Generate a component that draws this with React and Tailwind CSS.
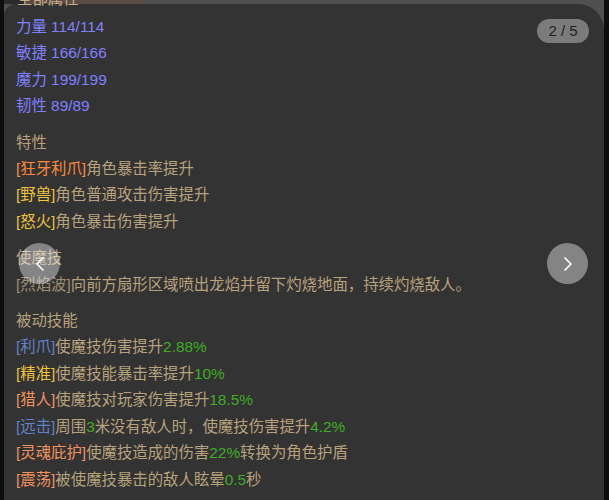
import React from 'react';

const font = { fontFamily: '"Liberation Sans", "Noto Sans CJK SC", sans-serif' };

const stats = [
  ['力量', '114/114'],
  ['敏捷', '166/166'],
  ['魔力', '199/199'],
  ['韧性', '89/89'],
];

const traits = [
  { tag: '狂牙利爪', color: 'text-[#ff8a3d]', text: '角色暴击率提升' },
  { tag: '野兽', color: 'text-[#eec23c]', text: '角色普通攻击伤害提升' },
  { tag: '怒火', color: 'text-[#eec23c]', text: '角色暴击伤害提升' },
];

// passive skills: parts are [text, isNumber]
const passives = [
  { tag: '利爪', color: 'text-[#5f82c8]', parts: [['使魔技伤害提升'], ['2.88%', 1]] },
  { tag: '精准', color: 'text-[#eec23c]', parts: [['使魔技能暴击率提升'], ['10%', 1]] },
  { tag: '猎人', color: 'text-[#f3925e]', parts: [['使魔技对玩家伤害提升'], ['18.5%', 1]] },
  {
    tag: '远击',
    color: 'text-[#5f82c8]',
    parts: [['周围'], ['3', 1], ['米没有敌人时，使魔技伤害提升'], ['4.2%', 1]],
  },
  {
    tag: '灵魂庇护',
    color: 'text-[#f3925e]',
    parts: [['使魔技造成的伤害'], ['22%', 1], ['转换为角色护盾']],
  },
  { tag: '震荡', color: 'text-[#f3925e]', parts: [['被使魔技暴击的敌人眩晕'], ['0.5', 1], ['秒']] },
];

function Chevron({ dir }) {
  return (
    <svg width="12" height="18" viewBox="0 0 12 18" fill="none">
      <polyline
        points={dir === 'left' ? '9,3 3,9 9,15' : '3,3 9,9 3,15'}
        stroke="#ffffff"
        strokeWidth="1.7"
        strokeLinecap="round"
        strokeLinejoin="round"
      />
    </svg>
  );
}

export default function App() {
  return (
    <div className="w-[609px] h-[500px] overflow-hidden bg-[#0e0e0e] pl-[4px] pr-[5px]" style={font}>
      <div className="relative h-full bg-[#4f4f4f] pt-[4px]">
        <div className="absolute left-0 top-0 w-[21px] h-[4px] bg-[#2b2b2b]" />
        <div className="absolute left-[21px] top-0 w-[120px] h-[4px] bg-[#5d4b45]" />

        <div className="relative h-full rounded-tl-[12px] rounded-tr-[26px] bg-[#333333] pl-[12px] pr-[12px] pt-[10px] text-[15.4px] leading-[26.4px] text-[#b8a27b]">
          <span className="absolute right-[15px] top-[15px] h-[24px] w-[52px] rounded-full bg-[#7b7b7b] text-[15px] leading-[24px] text-center text-[#1f1f1f]">
            2 / 5
          </span>

          <div className="text-[#8080ff]">
            {stats.map(([k, v]) => (
              <div key={k}>
                {k} {v}
              </div>
            ))}
          </div>

          <div className="mt-[10px]">
            <div>特性</div>
            {traits.map((t) => (
              <div key={t.tag}>
                <span className={t.color}>[{t.tag}]</span>
                {t.text}
              </div>
            ))}
          </div>

          <div className="mt-[10px]">
            <div>使魔技</div>
            <div>
              <span className="text-[#9d8e72]">[烈焰波]</span>
              向前方扇形区域喷出龙焰并留下灼烧地面，持续灼烧敌人。
            </div>
          </div>

          <div className="mt-[10px]">
            <div>被动技能</div>
            {passives.map((p) => (
              <div key={p.tag}>
                <span className={p.color}>[{p.tag}]</span>
                {p.parts.map(([s, num], i) => (
                  <span key={i} className={num ? 'text-[#3fae23]' : ''}>
                    {s}
                  </span>
                ))}
              </div>
            ))}
          </div>

          <button className="absolute left-[15px] top-[239px] flex h-[41px] w-[41px] items-center justify-center rounded-full bg-white/40">
            <Chevron dir="left" />
          </button>
          <button className="absolute right-[16px] top-[239px] flex h-[41px] w-[41px] items-center justify-center rounded-full bg-white/40">
            <Chevron dir="right" />
          </button>
        </div>

        <div className="absolute left-[13px] top-[-9px] text-[15.4px] leading-[16px] text-[#c4b08a]">全部属性</div>
      </div>
    </div>
  );
}
